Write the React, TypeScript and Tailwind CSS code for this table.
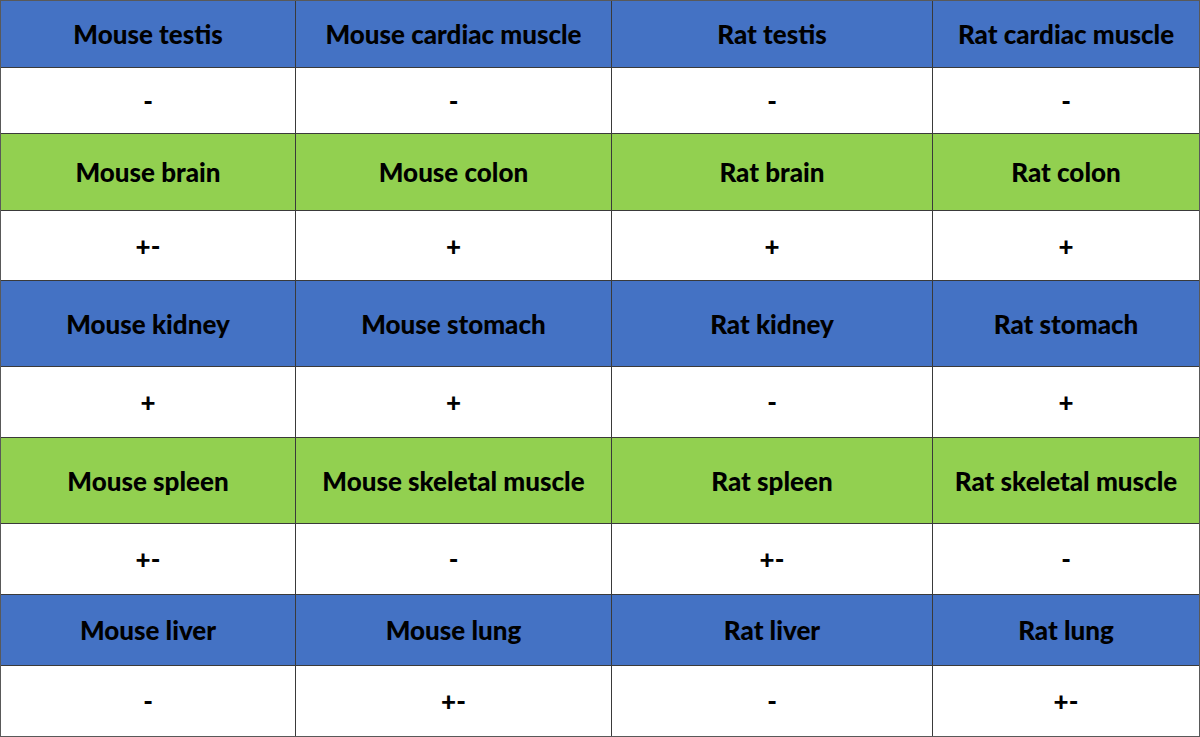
const rows: { kind: 'blue' | 'green' | 'white'; cells: string[] }[] = [
  { kind: 'blue', cells: ['Mouse testis', 'Mouse cardiac muscle', 'Rat testis', 'Rat cardiac muscle'] },
  { kind: 'white', cells: ['-', '-', '-', '-'] },
  { kind: 'green', cells: ['Mouse brain', 'Mouse colon', 'Rat brain', 'Rat colon'] },
  { kind: 'white', cells: ['+-', '+', '+', '+'] },
  { kind: 'blue', cells: ['Mouse kidney', 'Mouse stomach', 'Rat kidney', 'Rat stomach'] },
  { kind: 'white', cells: ['+', '+', '-', '+'] },
  { kind: 'green', cells: ['Mouse spleen', 'Mouse skeletal muscle', 'Rat spleen', 'Rat skeletal muscle'] },
  { kind: 'white', cells: ['+-', '-', '+-', '-'] },
  { kind: 'blue', cells: ['Mouse liver', 'Mouse lung', 'Rat liver', 'Rat lung'] },
  { kind: 'white', cells: ['-', '+-', '-', '+-'] },
]

const bg = {
  blue: 'bg-[#4472c4]',
  green: 'bg-[#92d050]',
  white: 'bg-white',
}

export default function App() {
  return (
    <div className="w-[1200px] h-[737px] bg-white">
      <div
        className="grid h-full border border-[#595959] bg-[#3a3a3a] gap-px grid-cols-[294px_315px_320px_1fr] grid-rows-[66px_65px_76px_69px_85px_70px_85px_70px_70px_1fr] font-['Lato','Liberation_Sans',sans-serif] font-black text-black"
      >
        {rows.map((row, r) =>
          row.cells.map((text, c) => (
            <div
              key={`${r}-${c}`}
              className={`${bg[row.kind]} flex items-center justify-center text-[26px] leading-none`}
            >
              {text}
            </div>
          ))
        )}
      </div>
    </div>
  )
}
